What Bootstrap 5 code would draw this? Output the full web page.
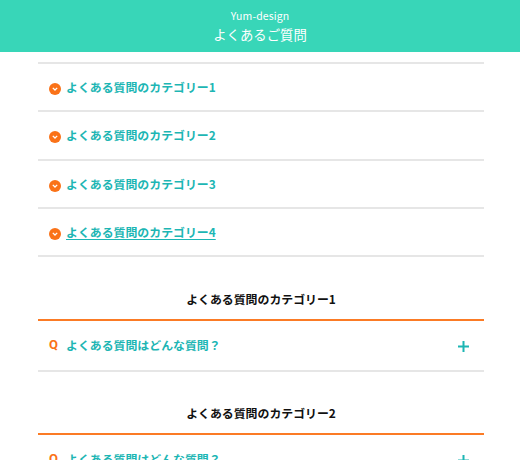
<!DOCTYPE html>
<html lang="ja">
<head>
<meta charset="utf-8">
<meta name="viewport" content="width=device-width, initial-scale=1">
<title>よくあるご質問</title>
<link href="https://cdn.jsdelivr.net/npm/bootstrap@5.3.0/dist/css/bootstrap.min.css" rel="stylesheet">
<style>
body{font-family:"Noto Sans CJK JP",sans-serif;font-size:11.9px;line-height:18px;height:460px;overflow:hidden;background:#fff;color:#111}
.site-head{height:52px;background:#38d6b8;padding-top:7px}
.site-name{font-size:10.5px;line-height:18px;letter-spacing:.1px}
.site-title{font-size:13.4px;line-height:18px}
.faq-wrap{margin:10px 36px 0 38px}
.cat-list{border-top:2px solid #e6e6e6}
.cat-link{height:48.25px;border-bottom:2px solid #e6e6e6;padding-left:11px;color:#1db6b4;text-decoration:none}
.cat-link svg{margin-right:5px;margin-top:4px}
.cat-link.current span{text-decoration:underline;text-decoration-thickness:1px;text-underline-offset:2px}
.faq-title{height:64px;padding-top:33px;font-size:11.9px;line-height:18px;border-bottom:2px solid #fb7b25;margin:0}
.faq-block{height:114px}
.faq-item{height:51px;border:0;border-bottom:2px solid #e6e6e6;background:none;color:#1db6b4;padding:0 14px 0 11px}
.faq-item span{margin-top:-2px}
.faq-item svg{margin-top:2px}
.q-mark{color:#fa7218;width:17px;font:700 13px/18px Roboto,sans-serif}
</style>
</head>
<body>
<header class="site-head text-white text-center">
<div class="site-name">Yum-design</div>
<h1 class="site-title fw-normal mb-0">よくあるご質問</h1>
</header>
<main class="faq-wrap">
<nav class="cat-list d-flex flex-column fw-bold">
<a class="cat-link d-flex align-items-center" href="#c1"><svg width="12" height="12" viewBox="0 0 12 12"><circle cx="6" cy="6" r="6" fill="#fa7218"/><path d="M3.8 4.9L6 7l2.2-2.1" fill="none" stroke="#fff" stroke-width="1.3"/></svg><span>よくある質問のカテゴリー1</span></a>
<a class="cat-link d-flex align-items-center" href="#c2"><svg width="12" height="12" viewBox="0 0 12 12"><circle cx="6" cy="6" r="6" fill="#fa7218"/><path d="M3.8 4.9L6 7l2.2-2.1" fill="none" stroke="#fff" stroke-width="1.3"/></svg><span>よくある質問のカテゴリー2</span></a>
<a class="cat-link d-flex align-items-center" href="#c3"><svg width="12" height="12" viewBox="0 0 12 12"><circle cx="6" cy="6" r="6" fill="#fa7218"/><path d="M3.8 4.9L6 7l2.2-2.1" fill="none" stroke="#fff" stroke-width="1.3"/></svg><span>よくある質問のカテゴリー3</span></a>
<a class="cat-link current d-flex align-items-center" href="#c4"><svg width="12" height="12" viewBox="0 0 12 12"><circle cx="6" cy="6" r="6" fill="#fa7218"/><path d="M3.8 4.9L6 7l2.2-2.1" fill="none" stroke="#fff" stroke-width="1.3"/></svg><span>よくある質問のカテゴリー4</span></a>
</nav>
<section class="faq-block" id="c1">
<h2 class="faq-title text-center fw-bold">よくある質問のカテゴリー1</h2>
<button class="faq-item d-flex align-items-center w-100 fw-bold text-start" type="button"><span class="q-mark">Q</span><span>よくある質問はどんな質問？</span><svg class="ms-auto" width="13" height="13" viewBox="0 0 13 13"><path d="M6.5 1v11M1 6.5h11" stroke="#1db6b4" stroke-width="2"/></svg></button>
</section>
<section class="faq-block" id="c2">
<h2 class="faq-title text-center fw-bold">よくある質問のカテゴリー2</h2>
<button class="faq-item d-flex align-items-center w-100 fw-bold text-start" type="button"><span class="q-mark">Q</span><span>よくある質問はどんな質問？</span><svg class="ms-auto" width="13" height="13" viewBox="0 0 13 13"><path d="M6.5 1v11M1 6.5h11" stroke="#1db6b4" stroke-width="2"/></svg></button>
</section>
</main>
<script src="https://cdn.jsdelivr.net/npm/bootstrap@5.3.0/dist/js/bootstrap.bundle.min.js"></script>
</body>
</html>
